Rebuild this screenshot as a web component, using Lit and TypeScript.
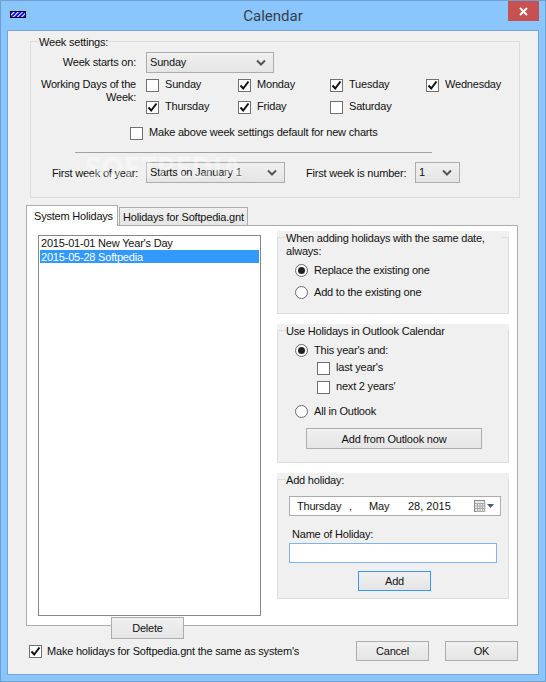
import { LitElement, html, css, svg } from "lit";
import { customElement } from "lit/decorators.js";

const check = (on: boolean, label: string) => html`
  <label class="check">
    <span class="box">${on ? html`<svg width="11" height="11" viewBox="0 0 11 11"><path d="M1.5 5.5 L4.2 8.5 L9.5 1.5" fill="none" stroke="#111" stroke-width="2"/></svg>` : ""}</span>
    <span>${label}</span>
  </label>`;

const radio = (on: boolean, label: string, cls: string) => html`
  <label class="radio ${cls}"><span class="circle">${on ? html`<i></i>` : ""}</span><span>${label}</span></label>`;

const chevron = svg`<path d="M1 1.5 L5 5.5 L9 1.5" fill="none" stroke="#555" stroke-width="2"/>`;

const select = (value: string, cls: string) => html`
  <div class="select ${cls}"><span>${value}</span><svg width="10" height="7" viewBox="0 0 10 7">${chevron}</svg></div>`;

@customElement("app-root")
export class AppRoot extends LitElement {
  static styles = css`
    :host { display: block; width: 546px; height: 682px; font-family: "Liberation Sans", Arial, sans-serif; font-size: 11px; letter-spacing: -.2px; line-height: 14px; color: #111; }
    * { box-sizing: border-box; }
    .frame { width: 546px; height: 682px; background: #8ac5fb; border: 1px solid #6c9fd2; padding: 0 6px 6px; display: flex; flex-direction: column; overflow: hidden; }
    .titlebar { height: 29px; display: grid; grid-template-columns: 1fr auto 1fr; flex: none; }
    .appicon { margin: 10px 0 0 3px; display: block; }
    .title { font-family: Roboto, sans-serif; font-size: 15px; letter-spacing: 0; line-height: 20px; padding-top: 5px; color: #33404f; }
    .close { justify-self: end; width: 31px; height: 20px; background: #c75050; display: flex; align-items: center; justify-content: center; }
    .client { width: 532px; height: 645px; background: #f0f0f0; border: 1px solid #74a5d6; display: flex; flex-direction: column; flex: none; }

    .week { position: relative; width: 490px; height: 157px; margin: 10px 0 0 22px; border: 1px solid #dcdcdc; padding: 0 0 0 8px; flex: none; }
    .legend { display: table; background: #f0f0f0; margin-top: -7px; height: 14px; white-space: nowrap; }
    .row { display: flex; }
    .lbl { width: 97px; text-align: right; flex: none; white-space: nowrap; }
    .r1 { margin-top: 3px; align-items: center; }
    .r1 .lbl { padding-bottom: 2px; }
    .select { height: 21px; border: 1px solid #acacac; background: linear-gradient(#f0f0f0, #e5e5e5); display: flex; align-items: center; justify-content: space-between; padding: 0 7px 2px 3px; margin-left: 10px; flex: none; }
    .select svg { margin-top: 2px; }
    .w128 { width: 128px; }
    .w139 { width: 139px; }
    .w45 { width: 45px; margin-left: 10px; }
    .r2 { margin-top: 6px; }
    .r2 .lbl { line-height: 13px; margin-top: -1px; }
    .days { margin-left: 10px; display: grid; grid-template-columns: 92px 92px 96px auto; grid-auto-rows: 22px; }
    .check { display: flex; align-items: flex-start; gap: 6px; white-space: nowrap; }
    .check > span:last-child { margin-top: -2px; }
    .box { width: 13px; height: 13px; border: 1px solid #707070; background: #fff; display: flex; align-items: center; justify-content: center; flex: none; }
    .r3 { margin: 4px 0 0 91px; }
    .hr { margin: 12px 0 0 36px; width: 357px; height: 1px; background: #a0a0a0; }
    .r5 { margin-top: 9px; align-items: center; }
    .r5 .lbl { width: 99px; }
    .r5 .select.w139 { margin-left: 8px; }
    .r5 .lbl2 { margin-left: 21px; white-space: nowrap; width: 99px; }
    .watermark { position: absolute; left: 54px; top: 108px; font-family: "Open Sans", sans-serif; font-weight: 700; font-size: 29px; letter-spacing: 0; line-height: 34px; color: rgba(255,255,255,.35); pointer-events: none; }

    .tabs { display: flex; align-items: flex-end; margin: 7px 0 0 18px; height: 21px; position: relative; z-index: 1; flex: none; }
    .tab { border: 1px solid #acacac; white-space: nowrap; }
    .tab.active { width: 92px; height: 21px; background: #fff; border-bottom: 0; padding: 3px 0 0 7px; }
    .tab.other { width: 129px; height: 18px; margin: 0 0 1px 1px; background: linear-gradient(#f0f0f0, #e5e5e5); padding: 2px 0 0 3px; border-bottom: 0; }
    .panel { position: relative; width: 492px; height: 401px; margin: -1px 0 0 18px; background: #fff; border: 1px solid #acacac; padding: 5px 0 0 11px; display: flex; gap: 16px; flex: none; }
    .list { width: 223px; height: 381px; margin-top: 4px; border: 1px solid #828790; padding: 1px; background: #fff; flex: none; }
    .item { height: 13px; line-height: 13px; padding-left: 1px; }
    .item.sel { background: #3399ff; color: #fff; height: 13px; line-height: 14px; }
    .side { width: 232px; display: flex; flex-direction: column; gap: 10px; }
    .gbox { background: #f0f0f0; padding-top: 6px; flex: none; }
    .ginner { border: 1px solid #dcdcdc; height: 100%; display: flex; flex-direction: column; padding-left: 8px; }
    .gbox .legend { margin-top: -7px; }
    .g1 { height: 83px; }
    .g2 { height: 139px; }
    .g3 { height: 126px; }
    .radio { display: flex; align-items: center; gap: 6px; height: 14px; white-space: nowrap; margin-left: 9px; }
    .circle { width: 13px; height: 13px; border-radius: 50%; border: 1px solid #6a6a6a; background: #fff; display: flex; align-items: center; justify-content: center; flex: none; }
    .circle i { width: 7px; height: 7px; border-radius: 50%; background: #222; display: block; }
    .g1 .legend { width: 215px; white-space: normal; line-height: 13px; padding-top: 1px; height: 27px; }
    .g1 .radio.a { margin-top: 5px; }
    .g1 .radio.b { margin-top: 8px; }
    .g2 .radio.a { margin-top: 5px; }
    .g2 .radio.b { margin-top: 10px; }
    .sub { margin: 5px 0 0 31px; }
    .sub .check { height: 13px; }
    .sub + .sub { margin-top: 6px; }
    .btn { height: 21px; border: 1px solid #acacac; background: linear-gradient(#f0f0f0, #e5e5e5); display: flex; align-items: center; justify-content: center; flex: none; }
    .btn.outlook { width: 176px; margin: 10px 0 0 20px; }
    .date { width: 212px; height: 20px; margin: 9px 0 0 3px; background: #fff; border: 1px solid #acacac; display: flex; align-items: center; padding-left: 7px; flex: none; }
    .date span { white-space: nowrap; }
    .d1 { width: 52px; }
    .d2 { width: 20px; }
    .d3 { width: 39px; }
    .d4 { width: 58px; letter-spacing: 0; }
    .date svg { display: block; margin-left: 8px; }
    .namelbl { margin: 11px 0 0 6px; }
    .input { width: 208px; height: 20px; margin: 2px 0 0 3px; background: #fff; border: 1px solid #7eb4ea; flex: none; }
    .btn.add { width: 73px; height: 20px; margin: 8px 0 0 72px; border-color: #3399ff; }
    .btn.delete { position: absolute; left: 84px; top: 391px; width: 73px; height: 22px; }
    .footer { display: flex; align-items: center; margin: 15px 20px 0 21px; height: 20px; }
    .footer .check { align-items: center; gap: 5px; }
    .footer .check > span:last-child { margin-top: 0; }
    .footer .btn { width: 73px; height: 20px; }
    .footer .cancel { margin-left: auto; }
    .footer .ok { margin-left: 16px; }
  `;

  render() {
    return html`
      <div class="frame">
        <div class="titlebar">
          <div>
            <svg class="appicon" width="16" height="7" viewBox="0 0 16 7">
              <defs>
                <pattern id="hatch" width="3" height="3" patternUnits="userSpaceOnUse" patternTransform="rotate(-45)">
                  <rect width="3" height="3" fill="#0000ff"></rect>
                  <rect width="3" height="1.1" fill="#fff"></rect>
                </pattern>
              </defs>
              <rect x=".5" y=".5" width="15" height="6" fill="url(#hatch)" stroke="#000"></rect>
            </svg>
          </div>
          <div class="title">Calendar</div>
          <div class="close">
            <svg width="9" height="9" viewBox="0 0 9 9"><path d="M1 1 L8 8 M8 1 L1 8" stroke="#fff" stroke-width="2"/></svg>
          </div>
        </div>
        <div class="client">
          <div class="week">
            <div class="legend">Week settings:</div>
            <div class="row r1"><div class="lbl">Week starts on:</div>${select("Sunday", "w128")}</div>
            <div class="row r2">
              <div class="lbl">Working Days of the<br />Week:</div>
              <div class="days">
                ${check(false, "Sunday")}${check(true, "Monday")}${check(true, "Tuesday")}${check(true, "Wednesday")}
                ${check(true, "Thursday")}${check(true, "Friday")}${check(false, "Saturday")}
              </div>
            </div>
            <div class="r3">${check(false, "Make above week settings default for new charts")}</div>
            <div class="hr"></div>
            <div class="row r5">
              <div class="lbl">First week of year:</div>
              ${select("Starts on January 1", "w139")}
              <div class="lbl2">First week is number:</div>
              ${select("1", "w45")}
            </div>
            <div class="watermark">SOFTPEDIA</div>
          </div>
          <div class="tabs">
            <div class="tab active">System Holidays</div>
            <div class="tab other">Holidays for Softpedia.gnt</div>
          </div>
          <div class="panel">
            <div class="list">
              <div class="item">2015-01-01 New Year's Day</div>
              <div class="item sel">2015-05-28 Softpedia</div>
            </div>
            <div class="side">
              <div class="gbox g1"><div class="ginner">
                <div class="legend">When adding holidays with the same date, always:</div>
                ${radio(true, "Replace the existing one", "a")}
                ${radio(false, "Add to the existing one", "b")}
              </div></div>
              <div class="gbox g2"><div class="ginner">
                <div class="legend">Use Holidays in Outlook Calendar</div>
                ${radio(true, "This year's and:", "a")}
                <div class="sub">${check(false, "last year's")}</div>
                <div class="sub">${check(false, "next 2 years'")}</div>
                ${radio(false, "All in Outlook", "b")}
                <div class="btn outlook">Add from Outlook now</div>
              </div></div>
              <div class="gbox g3"><div class="ginner">
                <div class="legend">Add holiday:</div>
                <div class="date">
                  <span class="d1">Thursday</span><span class="d2">,</span><span class="d3">May</span><span class="d4">28, 2015</span>
                  <svg width="22" height="12" viewBox="0 0 22 12">
                    <rect x=".5" y=".5" width="10" height="11" fill="#e8e8e8" stroke="#888"></rect>
                    <path d="M1 3.5 H10 M1 6 H10 M1 8.5 H10 M3.5 3 V11 M6 3 V11 M8.5 3 V11" stroke="#aaa" stroke-width="1"></path>
                    <path d="M11 1 V12 H2" fill="none" stroke="#ccc"></path>
                    <path d="M13 4 H20 L16.5 8 Z" fill="#44597d"></path>
                  </svg>
                </div>
                <div class="namelbl">Name of Holiday:</div>
                <div class="input"></div>
                <div class="btn add">Add</div>
              </div></div>
            </div>
            <div class="btn delete">Delete</div>
          </div>
          <div class="footer">
            ${check(true, "Make holidays for Softpedia.gnt the same as system's")}
            <div class="btn cancel">Cancel</div>
            <div class="btn ok">OK</div>
          </div>
        </div>
      </div>
    `;
  }
}
